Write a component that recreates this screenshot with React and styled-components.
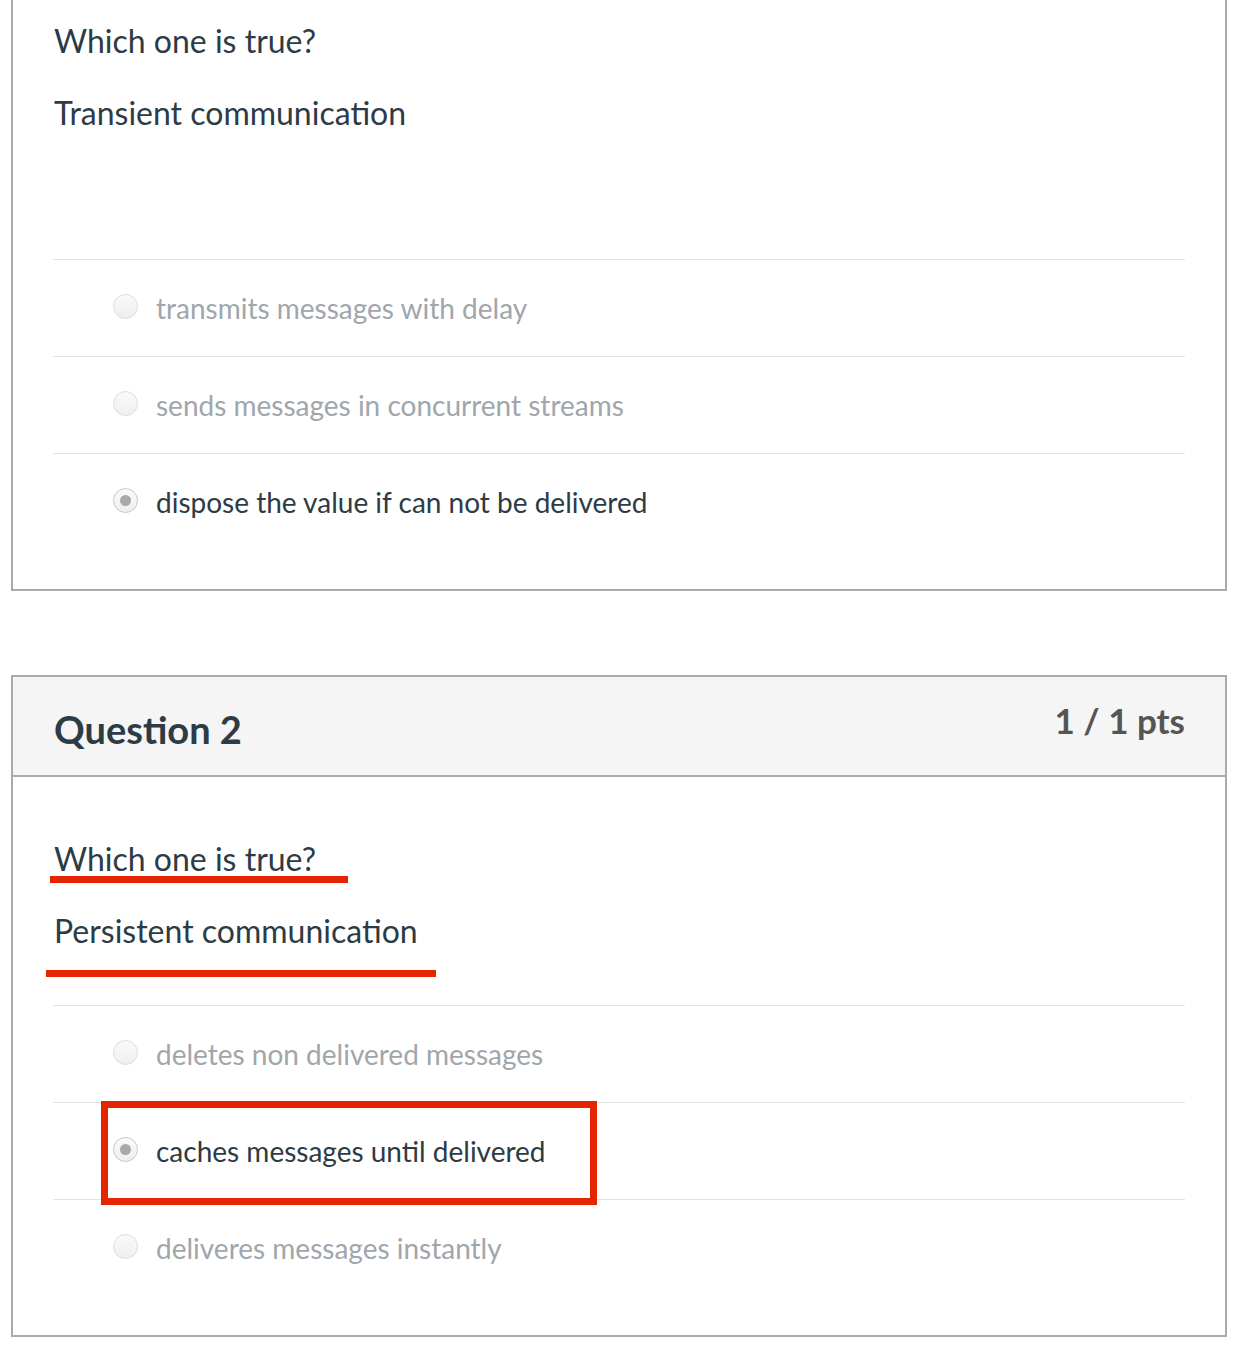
import React from "react";
import styled, { createGlobalStyle } from "styled-components";

const GlobalStyles = createGlobalStyle`
  body {
    margin: 0;
    background: #ffffff;
    font-family: Lato, "Noto Sans", "Liberation Sans", sans-serif;
    color: #2d3b45;
  }
`;

const Page = styled.div`
  padding: 0 8px 0 11px;
  display: flex;
  flex-direction: column;
  gap: 84px;
  width: 1216px;
`;

const Card = styled.section`
  position: relative;
  border: 2px solid #aaaaaa;
  border-top: ${(p) => (p.$cut ? "none" : "2px solid #aaaaaa")};
  background: #ffffff;
`;

const Header = styled.header`
  display: flex;
  justify-content: space-between;
  align-items: flex-start;
  background: #f5f5f5;
  border-bottom: 2px solid #aaaaaa;
  height: 98px;
  padding: 0 40px 0 41px;
`;

const Title = styled.h2`
  margin: 0;
  padding-top: 30px;
  font-size: 38px;
  line-height: 44px;
  font-weight: 700;
  color: #2d3b45;
`;

const Points = styled.div`
  padding-top: 23px;
  font-size: 35px;
  line-height: 40px;
  font-weight: 700;
  color: #555555;
`;

const Body = styled.div`
  padding: ${(p) => (p.$cut ? "18px" : "59px")} 40px 39px 40px;
`;

const QuestionText = styled.div`
  display: flex;
  flex-direction: column;
  gap: 27px;
  padding-left: 1px;
  margin-bottom: 52px;
`;

const Para = styled.p`
  margin: 0;
  font-size: 32px;
  line-height: 45px;
  min-height: 45px;
  color: #2d3b45;
`;

const Answers = styled.ul`
  list-style: none;
  margin: 0;
  padding: 0;
`;

const Answer = styled.li`
  display: flex;
  align-items: center;
  gap: 18px;
  height: 96px;
  padding-left: 60px;
  border-top: 1px solid #e3e3e3;
`;

const Radio = styled.span`
  position: relative;
  width: 23px;
  height: 23px;
  border-radius: 50%;
  border: 1px solid ${(p) => (p.$checked ? "#c8c8c8" : "#dddddd")};
  background: linear-gradient(#fafafa, #efefef);
  flex-shrink: 0;
  margin-top: -4px;

  &::after {
    content: "";
    display: ${(p) => (p.$checked ? "block" : "none")};
    position: absolute;
    left: 50%;
    top: 50%;
    width: 11px;
    height: 11px;
    margin: -5.5px 0 0 -5.5px;
    border-radius: 50%;
    background: #a9a9a9;
  }
`;

const AnswerLabel = styled.span`
  font-size: 28px;
  line-height: 39px;
  color: ${(p) => (p.$checked ? "#2d3b45" : "#a0a6ab")};
`;

const Underline = styled.div`
  position: absolute;
  left: ${(p) => p.$left}px;
  top: ${(p) => p.$top}px;
  width: ${(p) => p.$width}px;
  height: 7px;
  background: #e32600;
`;

const Highlight = styled.div`
  position: absolute;
  left: 88px;
  top: 424px;
  width: 496px;
  height: 104px;
  box-sizing: border-box;
  border: 7px solid #e32600;
`;

const questions = [
  {
    cut: true,
    text: ["Which one is true?", "Transient communication", ""],
    answers: [
      "transmits messages with delay",
      "sends messages in concurrent streams",
      "dispose the value if can not be delivered",
    ],
    checked: 2,
  },
  {
    title: "Question 2",
    points: "1 / 1 pts",
    text: ["Which one is true?", "Persistent communication"],
    answers: [
      "deletes non delivered messages",
      "caches messages until delivered",
      "deliveres messages instantly",
    ],
    checked: 1,
    marked: true,
  },
];

const App = () => {
  return (
    <>
      <GlobalStyles />
      <Page>
        {questions.map((q, i) => (
          <Card key={i} $cut={q.cut}>
            {q.title && (
              <Header>
                <Title>{q.title}</Title>
                <Points>{q.points}</Points>
              </Header>
            )}
            <Body $cut={q.cut}>
              <QuestionText>
                {q.text.map((t, j) => (
                  <Para key={j}>{t || "\u00a0"}</Para>
                ))}
              </QuestionText>
              <Answers>
                {q.answers.map((a, j) => (
                  <Answer key={j}>
                    <Radio $checked={j === q.checked} />
                    <AnswerLabel $checked={j === q.checked}>{a}</AnswerLabel>
                  </Answer>
                ))}
              </Answers>
            </Body>
            {q.marked && (
              <>
                <Underline $left={37} $top={199} $width={298} />
                <Underline $left={33} $top={293} $width={390} />
                <Highlight />
              </>
            )}
          </Card>
        ))}
      </Page>
    </>
  );
};

export default App;
